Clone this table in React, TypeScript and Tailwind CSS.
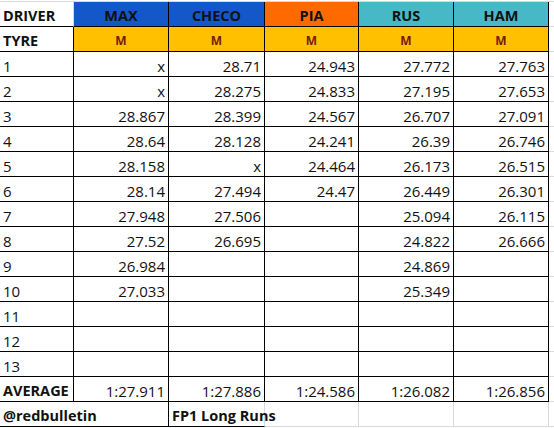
import React from 'react';

const drivers = [
  { name: 'MAX', bg: 'bg-[#1457c8]' },
  { name: 'CHECO', bg: 'bg-[#1457c8]' },
  { name: 'PIA', bg: 'bg-[#ff6a00]' },
  { name: 'RUS', bg: 'bg-[#47b9c6]' },
  { name: 'HAM', bg: 'bg-[#47b9c6]' },
];

// lap times per row, one entry per driver ('' = no lap)
const laps: string[][] = [
  ['x', '28.71', '24.943', '27.772', '27.763'],
  ['x', '28.275', '24.833', '27.195', '27.653'],
  ['28.867', '28.399', '24.567', '26.707', '27.091'],
  ['28.64', '28.128', '24.241', '26.39', '26.746'],
  ['28.158', 'x', '24.464', '26.173', '26.515'],
  ['28.14', '27.494', '24.47', '26.449', '26.301'],
  ['27.948', '27.506', '', '25.094', '26.115'],
  ['27.52', '26.695', '', '24.822', '26.666'],
  ['26.984', '', '', '24.869', ''],
  ['27.033', '', '', '25.349', ''],
  ['', '', '', '', ''],
  ['', '', '', '', ''],
  ['', '', '', '', ''],
];

const averages = ['1:27.911', '1:27.886', '1:24.586', '1:26.082', '1:26.856'];

const cell = 'h-[25px] border-r border-b border-black flex items-center pt-[4px] whitespace-nowrap';
const grid = 'grid grid-cols-[74px_95px_96px_94px_95px_95px_5px]';

export default function App() {
  return (
    <div className="w-[554px] h-[428px] bg-white overflow-hidden text-[#111] font-['Open_Sans',sans-serif] text-[15px] leading-none">
      <div className="h-[2px] border-b border-[#d9d9d9]" />

      <div className={grid}>
        <div className={`${cell} border-r-[#d9d9d9] pl-[3px] font-bold text-[14.5px]`}>DRIVER</div>
        {drivers.map((d) => (
          <div key={d.name} className={`${cell} ${d.bg} justify-center font-bold text-[14.5px]`}>{d.name}</div>
        ))}
        <div className="h-[25px] border-b border-[#d9d9d9]" />

        <div className={`${cell} pl-[3px] font-bold text-[14.5px]`}>TYRE</div>
        {drivers.map((d) => (
          <div key={d.name} className={`${cell} bg-[#ffc000] justify-center font-bold text-[12px] text-[#7a1a00]`}>M</div>
        ))}
        <div className="h-[25px] border-b border-[#d9d9d9]" />

        {laps.map((row, i) => (
          <React.Fragment key={i}>
            <div className={`${cell} pl-[3px]`}>{i + 1}</div>
            {row.map((t, j) => (
              <div key={j} className={`${cell} justify-end pr-[3px]`}>{t}</div>
            ))}
            <div className="h-[25px] border-b border-[#d9d9d9]" />
          </React.Fragment>
        ))}

        <div className={`${cell} pl-[3px] font-bold text-[14.5px]`}>AVERAGE</div>
        {averages.map((a) => (
          <div key={a} className={`${cell} justify-end pr-[3px]`}>{a}</div>
        ))}
        <div className="h-[25px] border-b border-[#d9d9d9]" />

        <div className={`${cell} col-span-2 pl-[3px] font-bold text-[14.5px]`}>@redbulletin</div>
        <div className={`${cell} border-r-[#d9d9d9] pl-[3px] font-bold text-[14.5px] overflow-visible`}>FP1 Long Runs</div>
        <div className="h-[25px] border-r border-b border-[#d9d9d9]" />
        <div className="h-[25px] border-r border-b border-[#d9d9d9]" />
        <div className="h-[25px] border-r border-b border-[#d9d9d9]" />
        <div className="h-[25px] border-b border-[#d9d9d9]" />
      </div>
    </div>
  );
}
